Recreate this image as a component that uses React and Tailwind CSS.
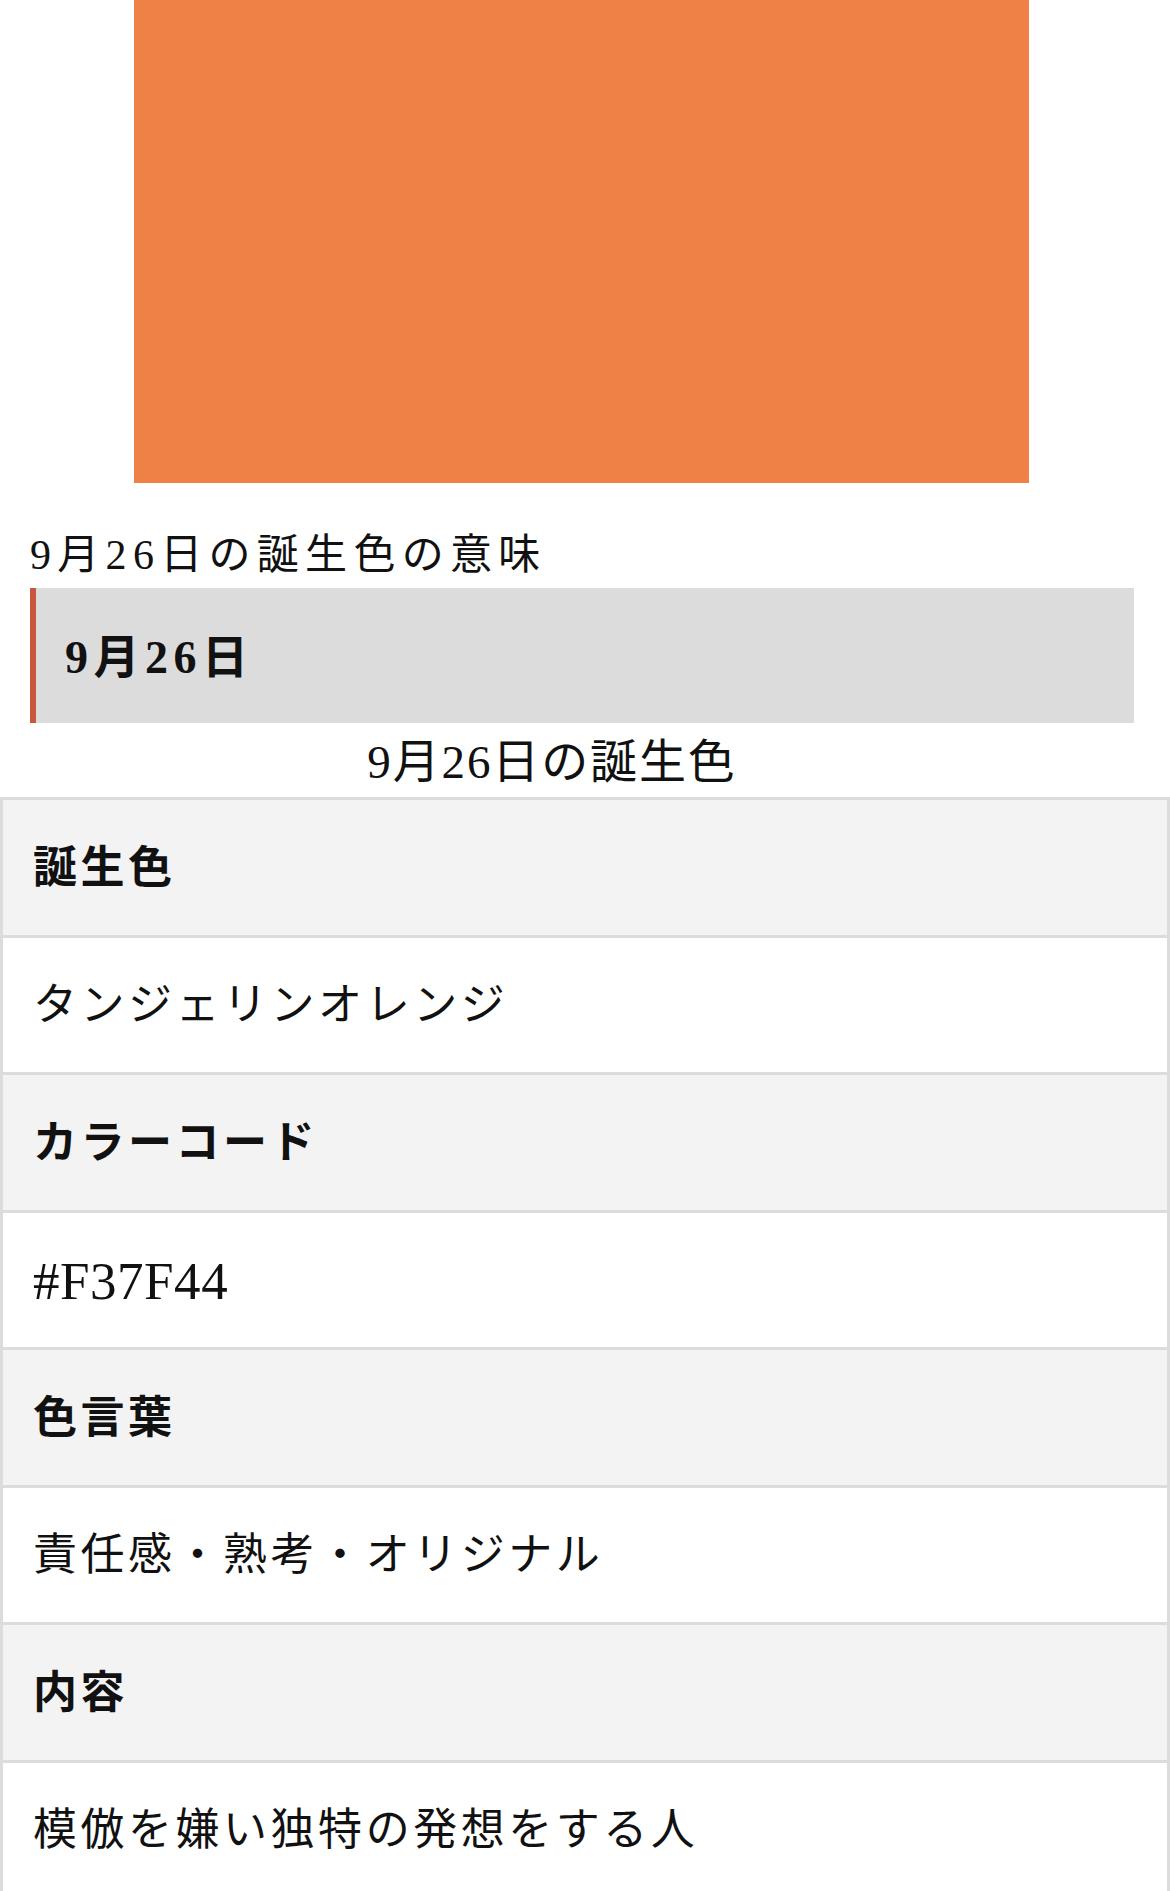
const rows = [
  { head: true, text: '誕生色' },
  { head: false, text: 'タンジェリンオレンジ' },
  { head: true, text: 'カラーコード' },
  { head: false, text: '#F37F44', latin: true },
  { head: true, text: '色言葉' },
  { head: false, text: '責任感・熟考・オリジナル' },
  { head: true, text: '内容' },
  { head: false, text: '模倣を嫌い独特の発想をする人' },
];

const App = () => {
  return (
    <main className="w-[1170px] min-h-[1891px] bg-white text-[#111] font-['Liberation_Serif','Noto_Sans_CJK_JP',serif] overflow-hidden">
      {/* Colour swatch */}
      <div className="ml-[134px] w-[895px] h-[483px] bg-[#f08146]" />

      {/* Title */}
      <h2 className="flex items-center h-[105px] pt-[39px] px-[30px] text-[42px] font-normal tracking-[0.15em] leading-none">
        9月26日の誕生色の意味
      </h2>

      {/* Date bar */}
      <div className="mx-[30px] w-[1104px] h-[135px] flex items-center pt-[4px] pl-[29px] bg-[#dcdcdc] border-l-[6px] border-[#c8573d] text-[46px] font-bold tracking-[0.12em] leading-none">
        9月26日
      </div>

      {/* Table caption */}
      <div className="flex items-center justify-center h-[74px] pt-[5px] pr-[66px] text-[47px] tracking-[0.04em] leading-none">
        9月26日の誕生色
      </div>

      {/* Colour table */}
      <div className="border-x-[3px] border-[#dcdcdc]">
        {rows.map((row) => (
          <div
            key={row.text}
            className={`flex items-center h-[137.5px] pt-[3px] pl-[30px] border-t-[3px] border-[#dcdcdc] leading-none ${
              row.head ? 'bg-[#f3f3f3] font-bold' : 'bg-white'
            } ${row.latin ? 'text-[53px] tracking-[0.01em]' : 'text-[44px] tracking-[0.08em]'}`}
          >
            {row.text}
          </div>
        ))}
      </div>
    </main>
  );
};

export default App;
